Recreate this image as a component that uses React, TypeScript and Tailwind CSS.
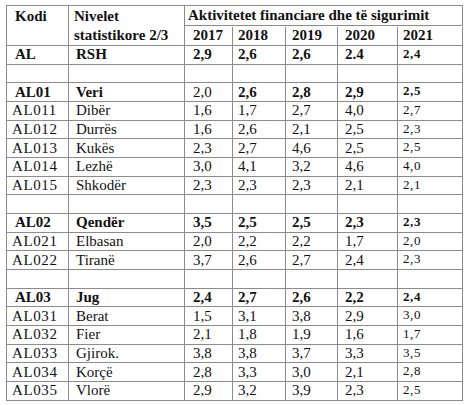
import React from 'react';

type Row = { code: string; name: string; vals: string[]; bold?: boolean; firstNormal?: boolean } | null;

const ROWS: Row[] = [
  { code: 'AL', name: 'RSH', vals: ['2,9', '2,6', '2,6', '2.4', '2,4'], bold: true },
  null,
  { code: 'AL01', name: 'Veri', vals: ['2,0', '2,6', '2,8', '2,9', '2,5'], bold: true, firstNormal: true },
  { code: 'AL011', name: 'Dibër', vals: ['1,6', '1,7', '2,7', '4,0', '2,7'] },
  { code: 'AL012', name: 'Durrës', vals: ['1,6', '2,6', '2,1', '2,5', '2,3'] },
  { code: 'AL013', name: 'Kukës', vals: ['2,3', '2,7', '4,6', '2,5', '2,5'] },
  { code: 'AL014', name: 'Lezhë', vals: ['3,0', '4,1', '3,2', '4,6', '4,0'] },
  { code: 'AL015', name: 'Shkodër', vals: ['2,3', '2,3', '2,3', '2,1', '2,1'] },
  null,
  { code: 'AL02', name: 'Qendër', vals: ['3,5', '2,5', '2,5', '2,3', '2,3'], bold: true },
  { code: 'AL021', name: 'Elbasan', vals: ['2,0', '2,2', '2,2', '1,7', '2,0'] },
  { code: 'AL022', name: 'Tiranë', vals: ['3,7', '2,6', '2,7', '2,4', '2,3'] },
  null,
  { code: 'AL03', name: 'Jug', vals: ['2,4', '2,7', '2,6', '2,2', '2,4'], bold: true },
  { code: 'AL031', name: 'Berat', vals: ['1,5', '3,1', '3,8', '2,9', '3,0'] },
  { code: 'AL032', name: 'Fier', vals: ['2,1', '1,8', '1,9', '1,6', '1,7'] },
  { code: 'AL033', name: 'Gjirok.', vals: ['3,8', '3,8', '3,7', '3,3', '3,5'] },
  { code: 'AL034', name: 'Korçë', vals: ['2,8', '3,3', '3,0', '2,1', '2,8'] },
  { code: 'AL035', name: 'Vlorë', vals: ['2,9', '3,2', '3,9', '2,3', '2,5'] },
];

const YEARS = ['2017', '2018', '2019', '2020', '2021'];
const VAL_PAD = ['pl-[8px]', 'pl-[5px]', 'pl-[6px]', 'pl-[7px]', 'pl-[5px]'];

const serif = "font-['Liberation_Serif','Times_New_Roman',serif]";
const cell = 'border-r border-b border-[#8c8c8c] h-[18.68px] flex items-center leading-none';

export default function App() {
  return (
    <div className={`w-[470px] h-[405px] bg-white pt-[5px] pl-[6px] text-[#111] ${serif}`}>
      <div className="grid grid-cols-[62px_116px_48px_53px_52px_60px_65px] w-[457px] border-t border-l border-[#8c8c8c] text-[15px]">
        {/* header */}
        <div className="row-span-2 border-r border-b border-[#8c8c8c] pl-[8px] pt-[1px] font-bold leading-[19px]">Kodi</div>
        <div className="row-span-2 border-r border-b border-[#8c8c8c] pl-[5px] pt-[1px] font-bold leading-[19px]">
          Nivelet<br />statistikore 2/3
        </div>
        <div className="col-span-5 h-[20px] border-r border-b border-[#8c8c8c] pl-[3px] flex items-center font-bold">
          Aktivitetet financiare dhe të sigurimit
        </div>
        {YEARS.map((y, i) => (
          <div key={y} className={`h-[19px] border-r border-b border-[#8c8c8c] flex items-center font-bold ${VAL_PAD[i]}`}>{y}</div>
        ))}

        {/* body */}
        {ROWS.map((r, ri) =>
          r === null ? (
            Array.from({ length: 7 }).map((_, ci) => <div key={`${ri}-${ci}`} className={cell} />)
          ) : (
            <React.Fragment key={r.code}>
              <div className={`${cell} ${r.bold ? 'font-bold pl-[8px]' : 'pl-[5px] tracking-[0.6px]'}`}>{r.code}</div>
              <div className={`${cell} pl-[7px] ${r.bold ? 'font-bold' : ''}`}>{r.name}</div>
              {r.vals.map((v, vi) => {
                const isBold = r.bold && !(r.firstNormal && vi === 0);
                if (vi === 4) {
                  return (
                    <div key={vi} className={`border-r border-b border-[#8c8c8c] h-[18.68px] pl-[5px] pt-[1px] text-[13px] leading-none tracking-[0.6px] ${isBold ? 'font-bold' : ''}`}>{v}</div>
                  );
                }
                return (
                  <div key={vi} className={`${cell} ${VAL_PAD[vi]} ${isBold ? 'font-bold' : ''}`}>{v}</div>
                );
              })}
            </React.Fragment>
          )
        )}
      </div>
    </div>
  );
}
